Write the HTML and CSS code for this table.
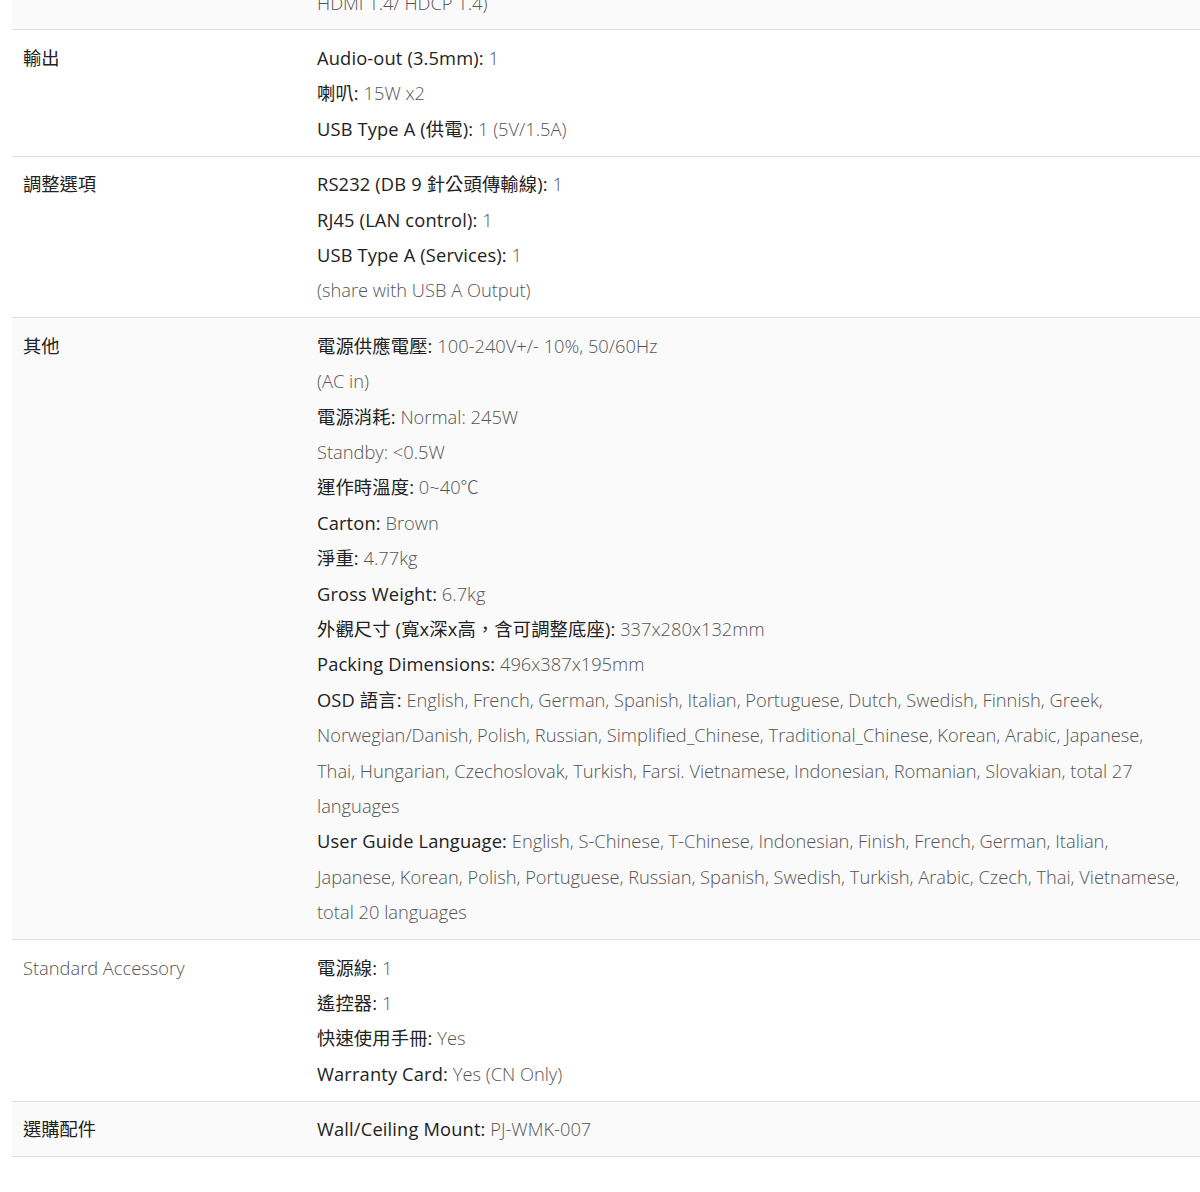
FILE: index.html
```html
<!DOCTYPE html>
<html lang="zh-Hant">
<head>
    <meta charset="UTF-8">
    <meta name="viewport" content="width=device-width, initial-scale=1.0">
    <title>規格</title>
    <link rel="stylesheet" href="styles.css">
</head>
<body>
    <table class="spec">
        <tr class="shade">
            <th></th>
            <td><p class="val">HDMI 1.4/ HDCP 1.4)</p></td>
        </tr>
        <tr>
            <th>輸出</th>
            <td>
                <p><b>Audio-out (3.5mm):</b> 1</p>
                <p><b>喇叭:</b> 15W x2</p>
                <p><b>USB Type A (供電):</b> 1 (5V/1.5A)</p>
            </td>
        </tr>
        <tr>
            <th>調整選項</th>
            <td>
                <p><b>RS232 (DB 9 針公頭傳輸線):</b> 1</p>
                <p><b>RJ45 (LAN control):</b> 1</p>
                <p><b>USB Type A (Services):</b> 1</p>
                <p>(share with USB A Output)</p>
            </td>
        </tr>
        <tr class="shade">
            <th>其他</th>
            <td>
                <p><b>電源供應電壓:</b> 100-240V+/- 10%, 50/60Hz</p>
                <p>(AC in)</p>
                <p><b>電源消耗:</b> Normal: 245W</p>
                <p>Standby: &lt;0.5W</p>
                <p><b>運作時溫度:</b> 0~40℃</p>
                <p><b>Carton:</b> Brown</p>
                <p><b>淨重:</b> 4.77kg</p>
                <p><b>Gross Weight:</b> 6.7kg</p>
                <p><b>外觀尺寸 (寬x深x高，含可調整底座):</b> 337x280x132mm</p>
                <p><b>Packing Dimensions:</b> 496x387x195mm</p>
                <p><b>OSD 語言:</b> English, French, German, Spanish, Italian, Portuguese, Dutch, Swedish, Finnish, Greek, Norwegian/Danish, Polish, Russian, Simplified_Chinese, Traditional_Chinese, Korean, Arabic, Japanese, Thai, Hungarian, Czechoslovak, Turkish, Farsi. Vietnamese, Indonesian, Romanian, Slovakian, total 27 languages</p>
                <p><b>User Guide Language:</b> English, S-Chinese, T-Chinese, Indonesian, Finish, French, German, Italian, Japanese, Korean, Polish, Portuguese, Russian, Spanish, Swedish, Turkish, Arabic, Czech, Thai, Vietnamese, total 20 languages</p>
            </td>
        </tr>
        <tr>
            <th class="plain">Standard Accessory</th>
            <td>
                <p><b>電源線:</b> 1</p>
                <p><b>遙控器:</b> 1</p>
                <p><b>快速使用手冊:</b> Yes</p>
                <p><b>Warranty Card:</b> Yes (CN Only)</p>
            </td>
        </tr>
        <tr class="shade">
            <th>選購配件</th>
            <td>
                <p><b>Wall/Ceiling Mount:</b> PJ-WMK-007</p>
            </td>
        </tr>
    </table>
</body>
</html>
```

FILE: styles.css
```css
body {
    margin: 0;
    background: #fff;
    font-family: "Open Sans", "Noto Sans CJK TC", sans-serif;
    font-size: 18.3px;
    color: #555;
}
.spec {
    width: 1188px;
    margin: -25px 0 0 12px;
    border-collapse: collapse;
}
.spec tr {
    border-bottom: 1px solid #ddd;
}
.spec tr.shade {
    background: #fafafa;
}
.spec th,
.spec td {
    padding: 9.5px 11px;
    vertical-align: top;
    text-align: left;
    line-height: 35.4px;
}
.spec th {
    width: 272px;
    font-weight: 400;
    color: #222;
}
.spec th.plain {
    font-weight: 300;
    color: #555;
}
.spec td {
    padding-right: 17px;
    font-weight: 300;
}
.spec p {
    margin: 0;
}
.spec b {
    font-weight: 400;
    color: #222;
    letter-spacing: 0.15px;
}
```
